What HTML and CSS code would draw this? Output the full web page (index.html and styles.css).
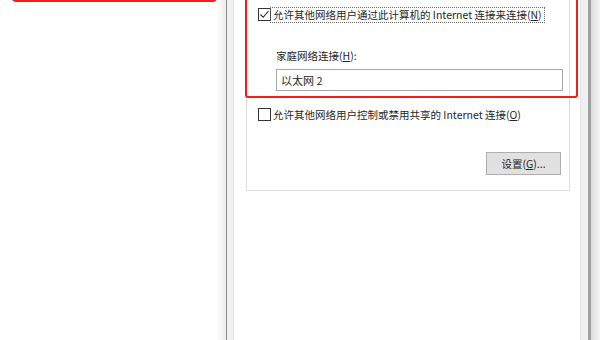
FILE: index.html
```html
<!DOCTYPE html>
<html lang="zh-CN">
<head>
    <meta charset="UTF-8">
    <title>Internet 连接共享</title>
    <link rel="stylesheet" href="styles.css">
</head>
<body>

    <!-- Left side, outside the dialog -->
    <div class="outside">
        <div class="mark-left"></div>
    </div>
    <div class="shadow-left"></div>

    <!-- Dialog window -->
    <div class="window">
        <div class="page">
            <div class="group">
                <div class="check-row">
                    <span class="checkbox">
                        <svg width="11" height="11" viewBox="0 0 11 11"><polyline points="1.5,5.5 4.2,8.3 9.5,2" fill="none" stroke="#222" stroke-width="1.1"/></svg>
                    </span>
                    <span class="focus">允许其他网络用户通过此计算机的 Internet 连接来连接(<u>N</u>)</span>
                </div>

                <div class="field-label">家庭网络连接(<u>H</u>):</div>
                <div class="textbox">以太网 2</div>

                <div class="check-row second">
                    <span class="checkbox"></span>
                    <span class="plain">允许其他网络用户控制或禁用共享的 Internet 连接(<u>O</u>)</span>
                </div>

                <button class="btn">设置(<u>G</u>)...</button>
            </div>

            <!-- Red highlight drawn over the group -->
            <div class="mark-right"></div>
        </div>
    </div>
    <div class="shadow-right"></div>

</body>
</html>
```

FILE: styles.css
```css
* {
    margin: 0;
    padding: 0;
    box-sizing: border-box;
}

body {
    display: flex;
    width: 600px;
    height: 340px;
    overflow: hidden;
    background: #ffffff;
    font-family: "Noto Sans CJK SC", "Noto Sans", sans-serif;
    font-size: 10.5px;
    color: #262626;
}

u {
    text-decoration: underline;
    text-underline-offset: 1px;
}

/* Outside area */
.outside {
    width: 216px;
    padding-left: 12px;
}

.mark-left {
    width: 205px;
    height: 22px;
    margin-top: -20px;
    border: 2.5px solid #f21d1d;
    border-radius: 4px;
}

.shadow-left {
    width: 10px;
    background: linear-gradient(to right, #ffffff, #ececec);
}

/* Dialog */
.window {
    display: flex;
    width: 365px;
    background: #f0f0f0;
    border-left: 1px solid #8c8c8c;
    border-right: 3px solid #a0a0a0;
    padding: 0 7px 0 6px;
}

.page {
    position: relative;
    width: 348px;
    background: #ffffff;
    border-left: 1px solid #e3e3e3;
    border-right: 1px solid #e3e3e3;
}

.shadow-right {
    width: 9px;
    background: linear-gradient(to right, #dcdcdc, #f4f4f4);
}

.group {
    display: flex;
    flex-direction: column;
    width: 324px;
    margin-left: 12px;
    border: 1px solid #dcdcdc;
    border-top: none;
    padding: 0 8px 15px 11px;
}

.check-row {
    display: flex;
    align-items: center;
    height: 15px;
    margin-top: 7px;
    white-space: nowrap;
}

.check-row.second {
    margin-top: 16px;
}

.checkbox {
    display: flex;
    align-items: center;
    justify-content: center;
    width: 13px;
    height: 13px;
    border: 1px solid #333333;
    background: #ffffff;
}

.focus {
    margin-left: -1px;
    padding: 0 2px 0 2px;
    line-height: 14px;
    border: 1px dotted #6a6a6a;
}

.plain {
    padding-left: 2px;
    line-height: 14px;
}

.field-label {
    margin-top: 26px;
    padding-left: 18px;
    line-height: 15px;
}

.textbox {
    width: 287px;
    height: 22px;
    margin: 6px 0 0 18px;
    padding-left: 4px;
    border: 1px solid #a8a8a8;
    line-height: 20px;
    font-size: 11px;
}

.btn {
    align-self: flex-end;
    width: 75px;
    height: 23px;
    margin-top: 30px;
    background: #e1e1e1;
    border: 1px solid #adadad;
    font-family: inherit;
    font-size: 10.5px;
    color: #262626;
}

.mark-right {
    position: absolute;
    left: 11px;
    top: -12px;
    width: 333px;
    height: 110px;
    border: 2.5px solid #f21d1d;
    border-radius: 3px;
    pointer-events: none;
}
```
